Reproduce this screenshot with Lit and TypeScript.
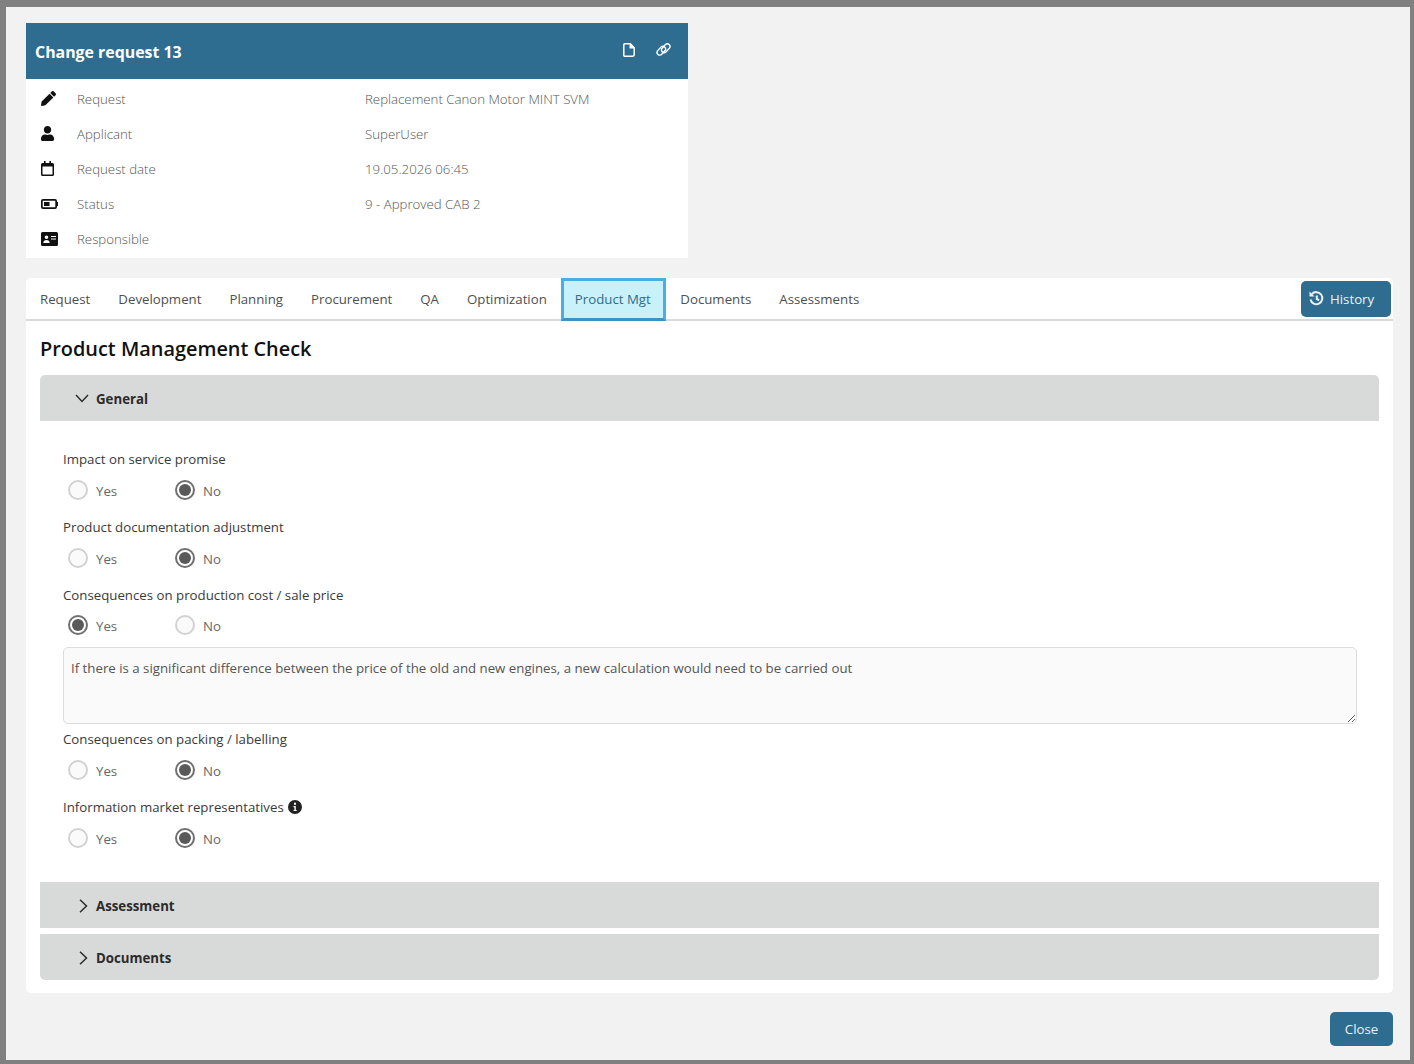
import { LitElement, html, css, svg, nothing } from 'lit';
import { customElement } from 'lit/decorators.js';

const pencil = svg`<path d="M497.9 142.1l-46.1 46.1c-4.7 4.7-12.3 4.7-17 0l-111-111c-4.7-4.7-4.7-12.3 0-17l46.1-46.1c18.7-18.7 49.1-18.7 67.9 0l60.1 60.1c18.8 18.7 18.8 49.1 0 67.9zM284.2 99.8L21.6 362.4.4 483.9c-2.9 16.4 11.4 30.6 27.8 27.8l121.5-21.3 262.6-262.6c4.7-4.7 4.7-12.3 0-17l-111-111c-4.8-4.7-12.4-4.7-17.1 0z"/>`;
const user = svg`<path d="M224 256c70.7 0 128-57.3 128-128S294.7 0 224 0 96 57.3 96 128s57.3 128 128 128zm89.6 32h-16.7c-22.2 10.2-46.9 16-72.9 16s-50.6-5.8-72.9-16h-16.7C60.2 288 0 348.2 0 422.4V464c0 26.5 21.5 48 48 48h352c26.5 0 48-21.5 48-48v-41.6c0-74.2-60.2-134.4-134.4-134.4z"/>`;

const rows = [
  { icon: 'pencil', label: 'Request', value: 'Replacement Canon Motor MINT SVM' },
  { icon: 'user', label: 'Applicant', value: 'SuperUser' },
  { icon: 'calendar', label: 'Request date', value: '19.05.2026 06:45' },
  { icon: 'battery', label: 'Status', value: '9 - Approved CAB 2' },
  { icon: 'idcard', label: 'Responsible', value: '' },
];

const tabs = ['Request', 'Development', 'Planning', 'Procurement', 'QA', 'Optimization', 'Product Mgt', 'Documents', 'Assessments'];

function rowIcon(name: string) {
  switch (name) {
    case 'pencil':
      return html`<svg class="ri" style="width:15px;height:15px" viewBox="0 0 512 512">${pencil}</svg>`;
    case 'user':
      return html`<svg class="ri" style="width:13px;height:15px" viewBox="0 0 448 512">${user}</svg>`;
    case 'calendar':
      return html`<svg class="ri" style="width:13px;height:15px" viewBox="0 0 13 15">
        <path d="M3 0h1.600v2h3.800V0H10v2h1.500A1.500 1.500 0 0 1 13 3.500v10a1.500 1.500 0 0 1-1.500 1.500h-10A1.500 1.500 0 0 1 0 13.500v-10A1.500 1.500 0 0 1 1.500 2H3zM1.500 5.500v8h10v-8z" fill-rule="evenodd"/>
      </svg>`;
    case 'battery':
      return html`<svg class="ri" style="width:17px;height:10px" viewBox="0 0 17 10">
        <path d="M2 0h12a2 2 0 0 1 2 2v1h1v4h-1v1a2 2 0 0 1-2 2H2a2 2 0 0 1-2-2V2a2 2 0 0 1 2-2zm0 1.700a.3.3 0 0 0-.3.3v6c0 .2.1.3.3.3h12a.3.3 0 0 0 .3-.3V2a.3.3 0 0 0-.3-.3z" fill-rule="evenodd"/>
        <rect x="3" y="3" width="5.500" height="4"/>
      </svg>`;
    default:
      return html`<svg class="ri" style="width:17px;height:14px" viewBox="0 0 17 14">
        <path d="M1.500 0h14A1.500 1.500 0 0 1 17 1.500v11a1.500 1.500 0 0 1-1.500 1.500h-14A1.500 1.500 0 0 1 0 12.500v-11A1.500 1.500 0 0 1 1.500 0zM10 4v1h5V4zm0 2.500v1h5v-1zM5.500 3.500a1.800 1.800 0 1 0 0 3.600 1.800 1.800 0 0 0 0-3.600zM2.300 11h6.400c0-1.700-1.300-3-3.200-3s-3.200 1.300-3.200 3z" fill-rule="evenodd"/>
      </svg>`;
  }
}

const chevDown = html`<svg class="chev-d" viewBox="0 0 14 9"><path d="M1 1l6 6.500L13 1" fill="none" stroke="#2b2b2b" stroke-width="1.500"/></svg>`;
const chevRight = html`<svg class="chev-r" viewBox="0 0 9 14"><path d="M1 .8L7.500 7 1 13.200" fill="none" stroke="#2b2b2b" stroke-width="1.500"/></svg>`;

const infoIcon = html`<svg class="info" viewBox="0 0 14 14">
  <path d="M7 0a7 7 0 1 1 0 14A7 7 0 0 1 7 0zM6 2.800v2h2v-2zM5.500 6v1.200h.9v2.700h-.9V11h3.200V9.900h-.9V6z" fill="#222" fill-rule="evenodd"/>
</svg>`;

@customElement('app-root')
export class AppRoot extends LitElement {
  static styles = css`
    :host {
      display: block;
      box-sizing: border-box;
      height: 1064px;
      border-style: solid;
      border-color: #808080;
      border-width: 7px 4px 4px 6px;
      background: #f2f2f2;
      font-family: "Open Sans", "Liberation Sans", sans-serif;
      font-size: 13.25px;
      color: #3a3a3a;
      overflow: hidden;
    }
    .page {
      display: flex;
      flex-direction: column;
      padding: 16px 17px 0 20px;
    }
    .card {
      width: 662px;
      background: #fff;
      margin-bottom: 20px;
    }
    .card-head {
      height: 56px;
      background: #2e6c90;
      color: #fff;
      display: flex;
      align-items: center;
      padding: 0 17px 0 9px;
    }
    .card-title {
      flex: 1;
      font-size: 15.9px;
      font-weight: 700;
      padding-top: 2px;
    }
    .card-actions {
      display: flex;
      align-items: center;
      gap: 21px;
      margin-top: -3px;
    }
    .card-body {
      padding: 2px 0;
    }
    .row {
      height: 35px;
      display: flex;
      align-items: center;
      font-weight: 300;
      color: #555;
    }
    .ic {
      width: 36px;
      padding-left: 15px;
      display: flex;
      align-items: center;
    }
    .ri { fill: #111; display: block; }
    .lbl { width: 288px; }
    .panel {
      width: 1367px;
      height: 715px;
      background: #fff;
      border-radius: 5px;
      box-sizing: border-box;
    }
    .tabs {
      height: 43px;
      box-sizing: border-box;
      border-bottom: 2px solid #d9d9d9;
      display: flex;
      align-items: stretch;
    }
    .tab {
      padding: 0 14px 2px;
      display: flex;
      align-items: center;
      color: #4f4f4f;
      box-sizing: border-box;
      margin-bottom: -2px;
    }
    .tab.active {
      background: #c9f1f9;
      color: #2e6c90;
      border: 3px solid #4aaede;
      border-bottom-color: #3c94c4;
      padding: 0 11px 1px;
      min-width: 105.5px;
    }
    .spacer { flex: 1; }
    .hist {
      align-self: flex-start;
      margin: 3px 2px 0 0;
      height: 36px;
      width: 90px;
      box-sizing: border-box;
      border-radius: 5px;
      background: #2e6c90;
      color: #eaf2f6;
      display: flex;
      align-items: center;
      gap: 6px;
      padding-left: 8px;
    }
    .hist svg { width: 15px; height: 15px; margin-top: -2px; }
    .content { padding: 0 14px; }
    h2 {
      margin: 0;
      height: 54px;
      display: flex;
      align-items: center;
      font-size: 19.9px;
      font-weight: 600;
      color: #111;
    }
    .acc {
      height: 46px;
      background: #d8dada;
      display: flex;
      align-items: center;
      font-weight: 700;
      color: #2b2b2b;
      padding-top: 1px;
      box-sizing: border-box;
    }
    .acc.first { border-radius: 5px 5px 0 0; }
    .acc.last { border-radius: 0 0 5px 5px; margin-top: 6px; }
    .chev-box {
      width: 56px;
      display: flex;
      justify-content: flex-end;
      padding-right: 7px;
      box-sizing: border-box;
    }
    .chev-d { width: 14px; height: 9px; }
    .chev-r { width: 9px; height: 14px; margin-right: 1px; }
    .acc-body {
      padding: 28px 22px 18px 23px;
    }
    .q {
      height: 20px;
      display: flex;
      align-items: center;
      gap: 4px;
    }
    .info { width: 14px; height: 14px; }
    .opts {
      height: 47.8px;
      display: flex;
      align-items: center;
      padding: 0 0 6px 5px;
      box-sizing: border-box;
    }
    .opt {
      width: 107px;
      display: flex;
      align-items: center;
      gap: 8px;
      color: #666;
    }
    .opt-t { padding-top: 2px; }
    .radio {
      width: 20px;
      height: 20px;
      box-sizing: border-box;
      border-radius: 50%;
      border: 2px solid #d2d2d2;
      background: #fafafa;
    }
    .radio.on {
      border-color: #707070;
      background: #fff;
      padding: 2px;
    }
    .radio.on::after {
      content: "";
      display: block;
      width: 12px;
      height: 12px;
      border-radius: 50%;
      background: #5a5a5a;
    }
    textarea {
      display: block;
      width: 1294px;
      height: 77px;
      box-sizing: border-box;
      margin: -5.4px 0 4.9px;
      padding: 11px 7px;
      border: 1px solid #dcdcdc;
      border-radius: 5px;
      background: #fafafa;
      color: #555;
      font: inherit;
      resize: vertical;
      outline: none;
    }
    .foot {
      display: flex;
      justify-content: flex-end;
      padding-top: 19px;
    }
    .close {
      width: 63px;
      height: 34px;
      border-radius: 5px;
      background: #2e6c90;
      color: #eaf2f6;
      display: flex;
      align-items: center;
      justify-content: center;
    }
  `;

  private _question(label: string, yes: boolean, info = false, note?: string) {
    return html`
      <div class="q">${label}${info ? infoIcon : nothing}</div>
      <div class="opts">
        <div class="opt"><span class="radio ${yes ? 'on' : ''}"></span><span class="opt-t">Yes</span></div>
        <div class="opt"><span class="radio ${yes ? '' : 'on'}"></span><span class="opt-t">No</span></div>
      </div>
      ${note ? html`<textarea .value=${note}></textarea>` : nothing}
    `;
  }

  render() {
    return html`
      <div class="page">
        <div class="card">
          <div class="card-head">
            <div class="card-title">Change request 13</div>
            <div class="card-actions">
              <svg width="12" height="14" viewBox="0 0 12 14" fill="none" stroke="#fff" stroke-width="1.500">
                <path d="M1.800.8h5.500l3.900 3.900v7a1.500 1.500 0 0 1-1.500 1.500H1.800A1 1 0 0 1 .8 12.200V1.800a1 1 0 0 1 1-1z"/>
                <path d="M7.300.8v3.900h3.900" fill="#fff"/>
              </svg>
              <svg width="15" height="13" viewBox="0 0 15 13" fill="none" stroke="#fff" stroke-width="1.400">
                <rect x="0.300" y="5" width="10" height="5.400" rx="2.700" transform="rotate(-48 5.300 7.700)"/>
                <rect x="4.700" y="2.600" width="10" height="5.400" rx="2.700" transform="rotate(-48 9.700 5.300)"/>
              </svg>
            </div>
          </div>
          <div class="card-body">
            ${rows.map(
              (r) => html`<div class="row">
                <div class="ic">${rowIcon(r.icon)}</div>
                <div class="lbl">${r.label}</div>
                <div>${r.value}</div>
              </div>`,
            )}
          </div>
        </div>

        <div class="panel">
          <div class="tabs">
            ${tabs.map((t) => html`<div class="tab ${t === 'Product Mgt' ? 'active' : ''}">${t}</div>`)}
            <div class="spacer"></div>
            <div class="hist">
              <svg viewBox="0 0 15 15" fill="none" stroke="#eaf2f6" stroke-width="2">
                <path d="M2.800 3.200A6 6 0 1 1 1.500 8.500"/>
                <path d="M7.800 4.500v3.400l2.300 1.500"/>
                <path d="M.5.500v5h5z" fill="#eaf2f6" stroke="none"/>
              </svg>
              History
            </div>
          </div>
          <div class="content">
            <h2>Product Management Check</h2>
            <div class="acc first"><div class="chev-box">${chevDown}</div>General</div>
            <div class="acc-body">
              ${this._question('Impact on service promise', false)}
              ${this._question('Product documentation adjustment', false)}
              ${this._question(
                'Consequences on production cost / sale price',
                true,
                false,
                'If there is a significant difference between the price of the old and new engines, a new calculation would need to be carried out',
              )}
              ${this._question('Consequences on packing / labelling', false)}
              ${this._question('Information market representatives', false, true)}
            </div>
            <div class="acc"><div class="chev-box">${chevRight}</div>Assessment</div>
            <div class="acc last"><div class="chev-box">${chevRight}</div>Documents</div>
          </div>
        </div>

        <div class="foot"><div class="close">Close</div></div>
      </div>
    `;
  }
}
